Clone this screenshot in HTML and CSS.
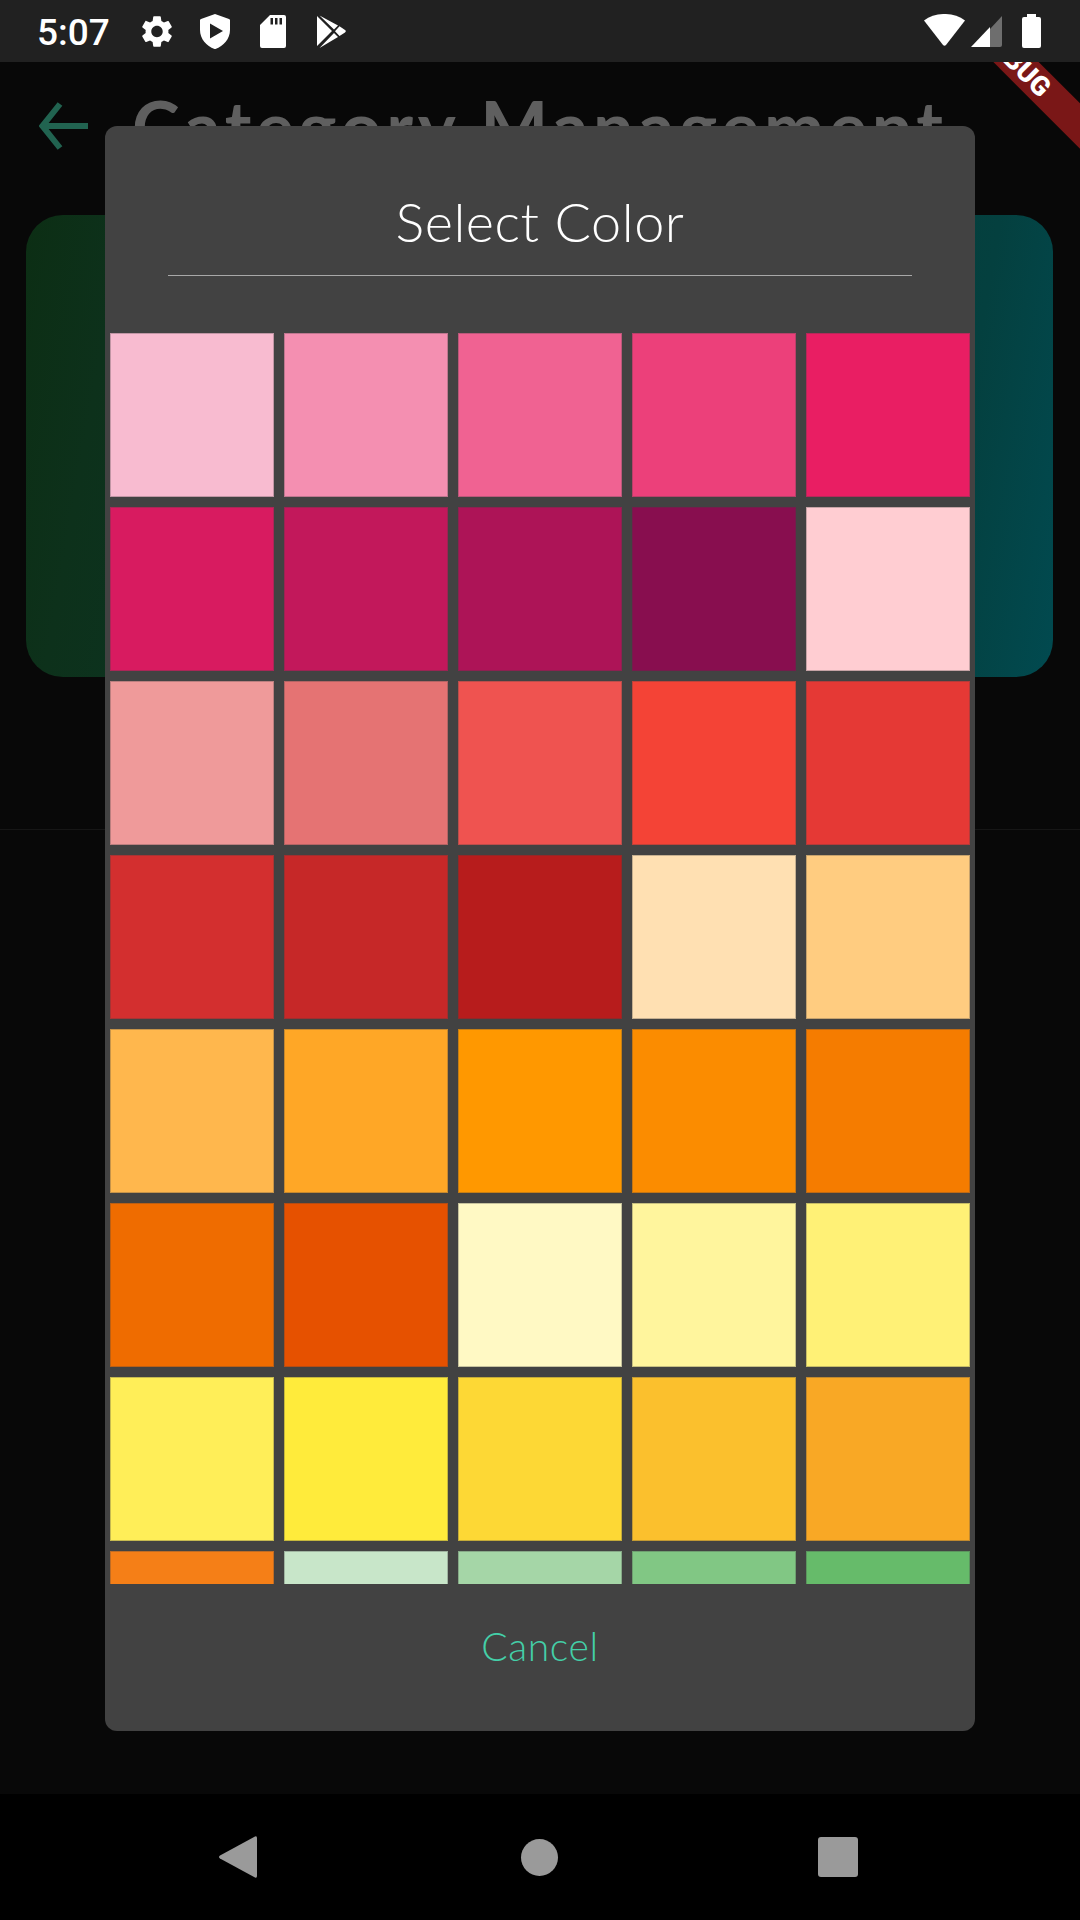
FILE: index.html
```html
<!DOCTYPE html>
<html>

  <head>
    <title>Category Management</title>
    <link rel="stylesheet" href="styles.css">
  </head>

  <body>
    <div class="status-bar">
      <span class="clock">5:07</span>

      <svg class="ic-gear" viewBox="2.64 1.6 18.72 20.8"><path fill="#fff" d="M19.14 12.94c.04-.3.06-.61.06-.94 0-.32-.02-.64-.07-.94l2.03-1.58c.18-.14.23-.41.12-.61l-1.92-3.32c-.12-.22-.37-.29-.59-.22l-2.39.96c-.5-.38-1.03-.7-1.62-.94l-.36-2.54c-.04-.24-.24-.41-.48-.41h-3.84c-.24 0-.43.17-.47.41l-.36 2.54c-.59.24-1.13.57-1.62.94l-2.39-.96c-.22-.08-.47 0-.59.22L2.74 8.87c-.12.21-.08.47.12.61l2.03 1.58c-.05.3-.09.63-.09.94s.02.64.07.94l-2.03 1.58c-.18.14-.23.41-.12.61l1.92 3.32c.12.22.37.29.59.22l2.39-.96c.5.38 1.03.7 1.62.94l.36 2.54c.05.24.24.41.48.41h3.84c.24 0 .44-.17.47-.41l.36-2.54c.59-.24 1.13-.56 1.62-.94l2.39.96c.22.08.47 0 .59-.22l1.92-3.32c.12-.22.07-.47-.12-.61l-2.01-1.58zM12 15.6c-1.98 0-3.6-1.62-3.6-3.6s1.62-3.6 3.6-3.6 3.6 1.62 3.6 3.6-1.62 3.6-3.6 3.6z"/></svg>

      <svg class="ic-shield" viewBox="0 0 30 35"><path fill="#fff" fill-rule="evenodd" d="M15 0 L29 5 Q30 5.4 30 6.5 V16 C30 25 23.5 32 15.5 35 H14.5 C6.5 32 0 25 0 16 V6.5 Q0 5.4 1 5 Z M10 9.5 V24.5 L23 17 Z"/></svg>

      <svg class="ic-sd" viewBox="0 0 26 33"><path fill="#fff" fill-rule="evenodd" d="M10 0 H24 Q26 0 26 2 V31 Q26 33 24 33 H2 Q0 33 0 31 V10 Z M10.5 3 V9.5 H13 V3 Z M15 3 V9.5 H17.5 V3 Z M19.5 3 V9.5 H22 V3 Z"/></svg>

      <svg class="ic-play" viewBox="0 0 29 33"><path fill="#fff" d="M0 1 L15 16 L0 31 Z M2.5 0.5 L17 14.5 L21 10.5 Z M22.5 11.2 L28 15 Q29.6 16.2 28 17.4 L22.5 21 L18 16.2 Z M2.5 33 L17 18 L21 22 Z"/></svg>

      <span class="status-space"></span>

      <svg class="ic-wifi" viewBox="0 0 41 32"><path fill="#fff" d="M0 6.5 C11 -2.2 30 -2.2 41 6.5 L22 31 Q20.5 32.6 19 31 Z"/></svg>

      <svg class="ic-signal" viewBox="0 0 31 31"><path fill="#6e6e6e" d="M19 31 V13 L31 0 V29 Q31 31 29 31 Z"/><path fill="#fff" d="M0 31 L19 11 V31 Z"/></svg>

      <svg class="ic-battery" viewBox="0 0 19 34"><path fill="#fff" d="M5 0 H14 V3 H17 Q19 3 19 5 V32 Q19 34 17 34 H2 Q0 34 0 32 V5 Q0 3 2 3 H5 Z"/></svg>
    </div>

    <div class="main">
      <div class="app-bar">
        <svg class="back-arrow" viewBox="0 0 49 48"><path fill="none" stroke="#216350" stroke-width="6" d="M21 2 L3.5 24 L21 46 M3.5 24 H49"/></svg>
        <span class="page-title">Category Management</span>
      </div>
      <div class="card"></div>
      <div class="rule"></div>

      <div class="banner">DEBUG</div>

      <div class="dialog">
        <div class="dialog-title">Select Color</div>
        <div class="dialog-line"></div>

        <div class="swatches">
          <div class="swatch pink-100"></div>
          <div class="swatch pink-200"></div>
          <div class="swatch pink-300"></div>
          <div class="swatch pink-400"></div>
          <div class="swatch pink-500"></div>
          <div class="swatch pink-600"></div>
          <div class="swatch pink-700"></div>
          <div class="swatch pink-800"></div>
          <div class="swatch pink-900"></div>
          <div class="swatch red-100"></div>
          <div class="swatch red-200"></div>
          <div class="swatch red-300"></div>
          <div class="swatch red-400"></div>
          <div class="swatch red-500"></div>
          <div class="swatch red-600"></div>
          <div class="swatch red-700"></div>
          <div class="swatch red-800"></div>
          <div class="swatch red-900"></div>
          <div class="swatch orange-100"></div>
          <div class="swatch orange-200"></div>
          <div class="swatch orange-300"></div>
          <div class="swatch orange-400"></div>
          <div class="swatch orange-500"></div>
          <div class="swatch orange-600"></div>
          <div class="swatch orange-700"></div>
          <div class="swatch orange-800"></div>
          <div class="swatch orange-900"></div>
          <div class="swatch yellow-100"></div>
          <div class="swatch yellow-200"></div>
          <div class="swatch yellow-300"></div>
          <div class="swatch yellow-400"></div>
          <div class="swatch yellow-500"></div>
          <div class="swatch yellow-600"></div>
          <div class="swatch yellow-700"></div>
          <div class="swatch yellow-800"></div>
          <div class="swatch yellow-900"></div>
          <div class="swatch green-100"></div>
          <div class="swatch green-200"></div>
          <div class="swatch green-300"></div>
          <div class="swatch green-400"></div>
        </div>

        <div class="dialog-action">Cancel</div>
      </div>
    </div>

    <div class="nav-bar">
      <svg class="nav-back" viewBox="0 0 38 42"><path fill="#9a9a9a" d="M36 .4 Q38 -.4 38 2 V40 Q38 42.4 36 41.6 L1 22.5 Q-1 21 1 19.5 Z"/></svg>
      <div class="nav-home"></div>
      <div class="nav-recent"></div>
    </div>
  </body>

</html>
```

FILE: styles.css
```css
body {
  margin: 0;
  width: 1080px;
  height: 1920px;
  display: flex;
  flex-direction: column;
  overflow: hidden;
  background-color: #080808;
  font-family: Lato, "Open Sans", sans-serif;
}

svg {
  display: block;
  flex: none;
}

/* status bar */
.status-bar {
  height: 62px;
  display: flex;
  align-items: flex-start;
  padding-left: 37px;
  background-color: #212121;
}

.clock {
  width: 71px;
  margin-top: 12px;
  font-family: Roboto, sans-serif;
  font-size: 37px;
  font-weight: 500;
  line-height: 42px;
  white-space: nowrap;
  color: #fff;
}

.status-space {
  flex: 1;
}

.ic-gear {
  width: 32px;
  height: 33px;
  margin: 15px 0 0 33px;
}

.ic-shield {
  width: 30px;
  height: 35px;
  margin: 14px 0 0 27px;
}

.ic-sd {
  width: 26px;
  height: 33px;
  margin: 15px 0 0 30px;
}

.ic-play {
  width: 29px;
  height: 33px;
  margin: 15px 0 0 31px;
}

.ic-wifi {
  width: 41px;
  height: 32px;
  margin-top: 14px;
}

.ic-signal {
  width: 31px;
  height: 31px;
  margin: 16px 0 0 6px;
}

.ic-battery {
  width: 19px;
  height: 34px;
  margin: 14px 39px 0 20px;
}

/* page behind the dialog */
.main {
  position: relative;
  flex: 1;
  overflow: hidden;
}

.app-bar {
  height: 153px;
  display: flex;
  align-items: flex-start;
  padding-left: 39px;
}

.back-arrow {
  width: 49px;
  height: 48px;
  margin-top: 40px;
}

.page-title {
  margin: 24px 0 0 44px;
  font-size: 72px;
  font-weight: 700;
  line-height: 80px;
  letter-spacing: 4.5px;
  white-space: nowrap;
  color: #5f5f5f;
}

.card {
  height: 462px;
  margin: 0 27px 0 26px;
  border-radius: 37px;
  background: linear-gradient(100deg, #0c2e14 0, #0d311b 9%, #04403f 88%, #014a50 100%);
}

.rule {
  height: 1px;
  margin-top: 152px;
  background-color: #161616;
}

.banner {
  position: absolute;
  left: 867px;
  top: -15px;
  width: 296px;
  height: 32px;
  padding-right: 4px;
  transform: rotate(45deg);
  background-color: #7a1717;
  font-family: Roboto, sans-serif;
  font-size: 27px;
  font-weight: 900;
  line-height: 32px;
  text-align: center;
  color: #fff;
}

/* dialog */
.dialog {
  position: absolute;
  left: 105px;
  top: 64px;
  width: 870px;
  height: 1605px;
  display: flex;
  flex-direction: column;
  border-radius: 12px;
  background-color: #424242;
}

.dialog-title {
  height: 148px;
  font-size: 54px;
  font-weight: 300;
  line-height: 192px;
  letter-spacing: .5px;
  text-align: center;
  color: #fff;
}

.dialog-line {
  height: 1px;
  margin: 0 63px;
  border-bottom: 1px solid #a8a8a8;
}

.swatches {
  height: 1251px;
  margin: 57px 5px 0 5px;
  display: grid;
  grid-template-columns: repeat(5, 164px);
  grid-auto-rows: 164px;
  gap: 10px;
  overflow: hidden;
}

.swatch {
  border: 1px solid rgba(66, 66, 66, .3);
}

.dialog-action {
  margin-top: 37px;
  font-size: 39px;
  font-weight: 300;
  line-height: 50px;
  letter-spacing: .6px;
  text-align: center;
  color: #44cfa8;
}

/* swatch colours */
.pink-100 { background-color: #f8bbd0; }
.pink-200 { background-color: #f48fb1; }
.pink-300 { background-color: #f06292; }
.pink-400 { background-color: #ec407a; }
.pink-500 { background-color: #e91e63; }
.pink-600 { background-color: #d81b60; }
.pink-700 { background-color: #c2185b; }
.pink-800 { background-color: #ad1457; }
.pink-900 { background-color: #880e4f; }
.red-100 { background-color: #ffcdd2; }
.red-200 { background-color: #ef9a9a; }
.red-300 { background-color: #e57373; }
.red-400 { background-color: #ef5350; }
.red-500 { background-color: #f44336; }
.red-600 { background-color: #e53935; }
.red-700 { background-color: #d32f2f; }
.red-800 { background-color: #c62828; }
.red-900 { background-color: #b71c1c; }
.orange-100 { background-color: #ffe0b2; }
.orange-200 { background-color: #ffcc80; }
.orange-300 { background-color: #ffb74d; }
.orange-400 { background-color: #ffa726; }
.orange-500 { background-color: #ff9800; }
.orange-600 { background-color: #fb8c00; }
.orange-700 { background-color: #f57c00; }
.orange-800 { background-color: #ef6c00; }
.orange-900 { background-color: #e65100; }
.yellow-100 { background-color: #fff9c4; }
.yellow-200 { background-color: #fff59d; }
.yellow-300 { background-color: #fff176; }
.yellow-400 { background-color: #ffee58; }
.yellow-500 { background-color: #ffeb3b; }
.yellow-600 { background-color: #fdd835; }
.yellow-700 { background-color: #fbc02d; }
.yellow-800 { background-color: #f9a825; }
.yellow-900 { background-color: #f57f17; }
.green-100 { background-color: #c8e6c9; }
.green-200 { background-color: #a5d6a7; }
.green-300 { background-color: #81c784; }
.green-400 { background-color: #66bb6a; }

/* nav bar */
.nav-bar {
  height: 126px;
  display: flex;
  align-items: center;
  padding-left: 219px;
  background-color: #000;
}

.nav-back {
  width: 38px;
  height: 42px;
  margin-right: 264px;
}

.nav-home {
  width: 37px;
  height: 37px;
  border-radius: 50%;
  background-color: #9a9a9a;
}

.nav-recent {
  width: 40px;
  height: 40px;
  margin-left: 260px;
  border-radius: 3px;
  background-color: #9a9a9a;
}
```
